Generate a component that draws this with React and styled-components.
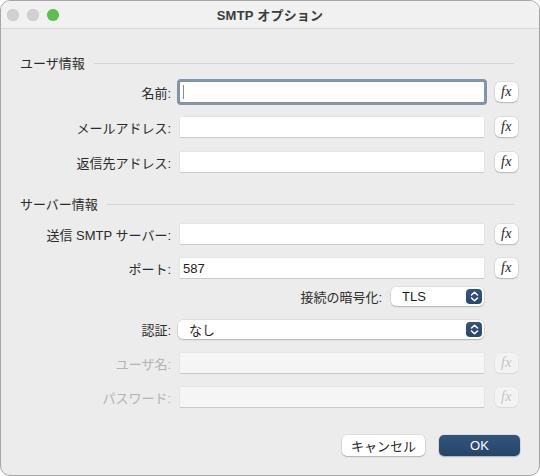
import React from 'react'
import styled, { createGlobalStyle } from 'styled-components'

const FONT = `"Liberation Sans", "Noto Sans CJK JP", sans-serif`

const GlobalStyle = createGlobalStyle`
  html, body {
    margin: 0;
    padding: 0;
    background: #ffffff;
  }
  body {
    font-family: ${FONT};
    -webkit-font-smoothing: antialiased;
  }
`

// Window chrome
//
const Window = styled.div`
  width: 538px;
  height: 474px;
  border: 1px solid #a6a6a6;
  border-radius: 10px;
  background: #ececec;
  overflow: hidden;
  display: flex;
  flex-direction: column;
  box-sizing: content-box;
`

const TitleBar = styled.div`
  height: 27px;
  flex: none;
  display: grid;
  grid-template-columns: 1fr auto 1fr;
  align-items: center;
  background: #f1f1f1;
  border-bottom: 1px solid #d9d9d9;
`

const Lights = styled.div`
  display: flex;
  gap: 8px;
  padding-left: 6px;
`

const Light = styled.span`
  width: 12px;
  height: 12px;
  border-radius: 50%;
  background: ${({ color }) => color};
  box-shadow: inset 0 0 0 0.5px rgba(0, 0, 0, 0.08);
`

const Title = styled.div`
  font-size: 13px;
  font-weight: 700;
  color: #3b3b3b;
  letter-spacing: 0.2px;
`

// Form body
//
const Body = styled.div`
  flex: 1;
  display: flex;
  flex-direction: column;
  padding: 25px 0 0;
`

const SectionHeader = styled.div`
  display: flex;
  align-items: center;
  gap: 9px;
  padding: 0 25px 0 19px;
  height: 16px;
  margin-top: ${({ $top }) => $top || 0}px;
  font-size: 13px;
  color: #2b2b2b;

  &::after {
    content: '';
    flex: 1;
    height: 1px;
    margin-top: 2px;
    background: #d5d5d5;
  }
`

const Row = styled.div`
  display: grid;
  grid-template-columns: 179px 304px 1fr;
  align-items: center;
  height: 20px;
  margin-top: ${({ $top }) => $top || 0}px;
`

const Label = styled.label`
  text-align: right;
  padding-right: 9px;
  font-size: 13px;
  color: ${({ $disabled }) => ($disabled ? '#b3b3b3' : '#2b2b2b')};
  white-space: nowrap;
`

const Field = styled.div`
  position: relative;
  height: 20px;
  box-sizing: border-box;
  padding-left: 3px;
  display: flex;
  align-items: center;
  font-size: 13px;
  color: #1e1e1e;
  background: ${({ $disabled }) => ($disabled ? '#f5f5f5' : '#ffffff')};
  box-shadow: 0 0 0 0.5px rgba(0, 0, 0, 0.06), 0 1px 0 rgba(0, 0, 0, 0.12);

  ${({ $focused }) =>
    $focused &&
    `
    outline: 3px solid #8194a8;
    outline-offset: 0;
    border-radius: 1px;
  `}
`

const Caret = styled.span`
  width: 1px;
  height: 14px;
  background: #8a8a8a;
`

const FxButton = styled.button`
  margin-left: 11px;
  width: 23px;
  height: 20px;
  padding: 0 0 1px;
  border: none;
  border-radius: 5px;
  background: ${({ disabled }) => (disabled ? '#f3f3f3' : '#ffffff')};
  box-shadow: ${({ disabled }) =>
    disabled
      ? '0 0 0 0.5px rgba(0, 0, 0, 0.05), 0 1px 1px rgba(0, 0, 0, 0.06)'
      : '0 0 0 0.5px rgba(0, 0, 0, 0.12), 0 1px 1.5px rgba(0, 0, 0, 0.18)'};
  font-family: "Liberation Serif", "DejaVu Serif", serif;
  font-style: italic;
  font-weight: 400;
  font-size: 14px;
  letter-spacing: 0.5px;
  color: ${({ disabled }) => (disabled ? '#c4c4c4' : '#222222')};
  display: flex;
  align-items: center;
  justify-content: center;
`

const EncryptRow = styled.div`
  display: flex;
  align-items: center;
  justify-content: flex-end;
  width: 483px;
  height: 19px;
  margin-top: 9px;
`

const Popup = styled.div`
  position: relative;
  width: ${({ $width }) => $width}px;
  margin-left: ${({ $shift }) => $shift || 0}px;
  height: 19px;
  box-sizing: border-box;
  padding-left: 11px;
  display: flex;
  align-items: center;
  background: #ffffff;
  border-radius: 5px;
  box-shadow: 0 0 0 0.5px rgba(0, 0, 0, 0.1), 0 1px 1.5px rgba(0, 0, 0, 0.2);
  font-size: 13px;
  color: #1e1e1e;
`

const Stepper = styled.span`
  position: absolute;
  right: 2px;
  top: 2px;
  width: 16px;
  height: 15px;
  border-radius: 4px;
  background: linear-gradient(#34557b, #29476b);
  display: flex;
  align-items: center;
  justify-content: center;
`

const Footer = styled.div`
  margin-top: auto;
  display: flex;
  justify-content: flex-end;
  gap: 14px;
  padding: 0 19px 19px 0;
`

const PushButton = styled.button`
  width: ${({ $width }) => $width}px;
  height: 21px;
  padding: 0;
  border: none;
  border-radius: 5px;
  font-family: ${FONT};
  font-size: 13px;
  color: ${({ $primary }) => ($primary ? '#ffffff' : '#262626')};
  background: ${({ $primary }) =>
    $primary ? 'linear-gradient(#33557c, #264467)' : '#ffffff'};
  box-shadow: 0 0 0 0.5px rgba(0, 0, 0, 0.12), 0 1px 1.5px rgba(0, 0, 0, 0.2);
`

const UpDown = () => (
  <svg width="9" height="11" viewBox="0 0 9 11" fill="none">
    <path
      d="M1.5 4 L4.5 1.2 L7.5 4 M1.5 7 L4.5 9.8 L7.5 7"
      stroke="#ffffff"
      strokeWidth="1.5"
      strokeLinecap="round"
      strokeLinejoin="round"
    />
  </svg>
)

const TextRow = ({ label, value, top, focused, disabled }) => (
  <Row $top={top}>
    <Label $disabled={disabled}>{label}</Label>
    <Field $focused={focused} $disabled={disabled}>
      {focused ? <Caret /> : value}
    </Field>
    <FxButton disabled={disabled}>fx</FxButton>
  </Row>
)

export default function App() {
  return (
    <>
      <GlobalStyle />
      <Window>
        <TitleBar>
          <Lights>
            <Light color="#d1d1d1" />
            <Light color="#d1d1d1" />
            <Light color="#58c24a" />
          </Lights>
          <Title>SMTP オプション</Title>
          <span />
        </TitleBar>

        <Body>
          <SectionHeader>ユーザ情報</SectionHeader>
          <TextRow label="名前:" top={12} focused />
          <TextRow label="メールアドレス:" top={15} />
          <TextRow label="返信先アドレス:" top={15} />

          <SectionHeader $top={23}>サーバー情報</SectionHeader>
          <TextRow label="送信 SMTP サーバー:" top={13} />
          <TextRow label="ポート:" value="587" top={14} />

          <EncryptRow>
            <Label>接続の暗号化:</Label>
            <Popup $width={93}>
              TLS
              <Stepper>
                <UpDown />
              </Stepper>
            </Popup>
          </EncryptRow>

          <Row $top={13}>
            <Label>認証:</Label>
            <Popup $width={306} $shift={-2}>
              なし
              <Stepper>
                <UpDown />
              </Stepper>
            </Popup>
          </Row>

          <TextRow label="ユーザ名:" top={14} disabled />
          <TextRow label="パスワード:" top={14} disabled />

          <Footer>
            <PushButton $width={83}>キャンセル</PushButton>
            <PushButton $width={81} $primary>
              OK
            </PushButton>
          </Footer>
        </Body>
      </Window>
    </>
  )
}
